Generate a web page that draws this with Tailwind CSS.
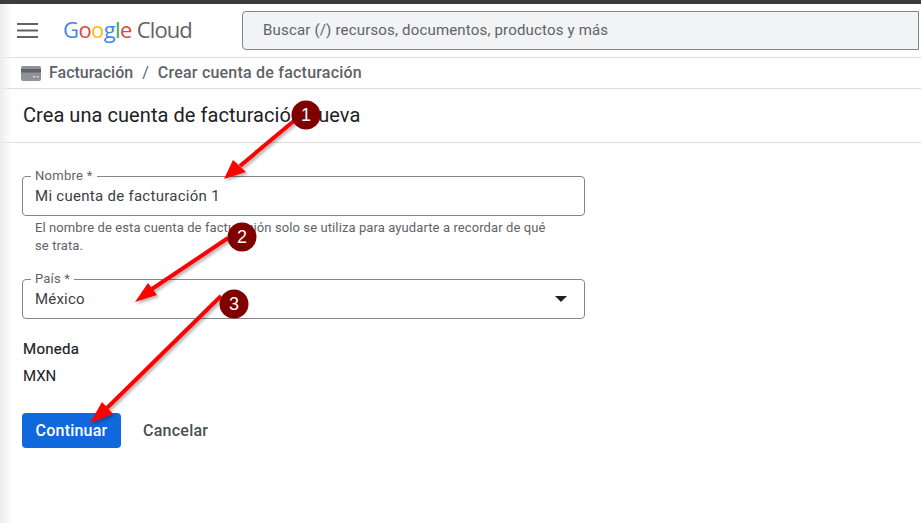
<!DOCTYPE html>
<html lang="es">
<head>
    <meta charset="UTF-8">
    <title>Crear cuenta de facturación</title>
    <script src="https://cdn.jsdelivr.net/npm/@tailwindcss/browser@4"></script>
</head>
<body class="bg-white font-['Roboto',sans-serif] text-[#202124] overflow-hidden">
<div class="relative w-[921px] h-[523px] overflow-hidden">
    <div class="h-1 bg-[#3c3c3c]"></div>

    <!-- Top bar -->
    <header class="h-[54px] flex items-center border-b border-[#dadce0]">
        <svg class="ml-[17px] w-[21px] h-[15px] shrink-0" viewBox="0 0 21 15"><path d="M0 1h21M0 7.5h21M0 14h21" stroke="#5f6368" stroke-width="2"/></svg>
        <div class="ml-[25px] w-[179px] -mt-[2px] flex items-baseline font-['Open_Sans',sans-serif] text-[22px] tracking-[-0.6px]">
            <span><span class="text-[#4285f4]">G</span><span class="text-[#ea4335]">o</span><span class="text-[#fbbc05]">o</span><span class="text-[#4285f4]">g</span><span class="text-[#34a853]">l</span><span class="text-[#ea4335]">e</span></span>
            <span class="ml-[5px] text-[#5f6368] tracking-[-0.9px]">Cloud</span>
        </div>
        <div class="w-[677px] h-[39px] flex items-center pl-5 bg-[#f1f3f4] border border-[#80868b] rounded-l text-[15px] text-[#5f6368] tracking-[0.18px]">Buscar (/) recursos, documentos, productos y más</div>
    </header>

    <!-- Breadcrumb -->
    <nav class="h-[31px] flex items-center pl-[21px] border-b border-[#dadce0] text-base font-medium text-[#5f6368]">
        <svg class="w-5 h-[15px]" viewBox="0 0 20 15"><rect width="20" height="15" rx="2" fill="#8f9296"/><rect y="3" width="20" height="3.500" fill="#5f6368"/><path d="M12 10h2v1.500h-2zM15.500 10h2v1.500h-2z" fill="#dadce0"/></svg>
        <span class="ml-2">Facturación</span>
        <span class="ml-[9px] font-normal">/</span>
        <span class="ml-[9px] tracking-[0.22px]">Crear cuenta de facturación</span>
    </nav>

    <!-- Heading -->
    <div class="h-[54px] flex items-center pl-[23px] pb-[2px] border-b border-[#dadce0] text-xl tracking-[0.06px]">Crea una cuenta de facturación nueva</div>

    <!-- Form -->
    <form class="pl-[22px] pt-[33px] w-[585px]">
        <div class="relative h-10 border border-[#80868b] rounded flex items-center pl-[12px] text-[15px] text-[#3c4043] tracking-[0.28px]">
            <span class="absolute -top-[8px] left-[8px] px-1 bg-white text-[13px] leading-[14px] text-[#5f6368]">Nombre *</span>
            Mi cuenta de facturación 1
        </div>
        <p class="pl-[13px] pr-[35px] pt-[3px] text-[13px] leading-[18px] tracking-[0.1px] text-[#5f6368]">El nombre de esta cuenta de facturación solo se utiliza para ayudarte a recordar de qué se trata.</p>
        <div class="relative mt-[24px] h-10 border border-[#80868b] rounded flex items-center justify-between pl-[12px] pr-[17px] text-[15px] text-[#3c4043] tracking-[0.2px]">
            <span class="absolute -top-[8px] left-[8px] px-1 bg-white text-[13px] leading-[14px] text-[#5f6368]">País *</span>
            México
            <svg class="w-[12px] h-[6px]" viewBox="0 0 12 6"><path d="M0 0h12L6 6z" fill="#202124"/></svg>
        </div>
        <div class="mt-[20px] pl-px text-[15px] leading-5 tracking-[0.3px] [-webkit-text-stroke:0.2px_#202124]">Moneda</div>
        <div class="mt-[7px] pl-px text-[15px] leading-5">MXN</div>
        <div class="mt-[27px] flex items-center">
            <button type="button" class="w-[99px] h-[35px] bg-[#0f69dc] rounded text-white text-base font-medium tracking-[0.22px]">Continuar</button>
            <button type="button" class="ml-[22px] text-base font-medium text-[#4a4f54] tracking-[0.25px]">Cancelar</button>
        </div>
    </form>

    <!-- Left edge shadow -->
    <div class="absolute left-0 top-1 bottom-0 w-3 bg-gradient-to-r from-[#ececec] to-transparent pointer-events-none"></div>

    <!-- Annotations -->
    <svg class="absolute inset-0 w-[921px] h-[523px] pointer-events-none" viewBox="0 0 921 523">
        <defs><filter id="sh" x="-20%" y="-20%" width="140%" height="140%"><feDropShadow dx="2" dy="2" stdDeviation="1.500" flood-color="#000" flood-opacity="0.3"/></filter></defs>
        <g filter="url(#sh)">
            <path d="M295 120L240 166" stroke="#ff0000" stroke-width="4"/>
            <path d="M224 179L233 160L246 172z" fill="#ff0000"/>
            <path d="M228 238L152 289" stroke="#ff0000" stroke-width="4"/>
            <path d="M135 302L148 283L157 295z" fill="#ff0000"/>
            <path d="M221 296L107 408" stroke="#ff0000" stroke-width="4"/>
            <path d="M90 423L102 402L113 414z" fill="#ff0000"/>
        </g>
        <g font-family="Liberation Sans, sans-serif" font-size="18" fill="#fff" text-anchor="middle">
            <circle cx="306" cy="115" r="14.500" fill="#800000"/><text x="306" y="121">1</text>
            <circle cx="242" cy="237" r="14.500" fill="#800000"/><text x="242" y="243">2</text>
            <circle cx="234" cy="304" r="14.500" fill="#800000"/><text x="234" y="310">3</text>
        </g>
    </svg>
</div>
</body>
</html>
